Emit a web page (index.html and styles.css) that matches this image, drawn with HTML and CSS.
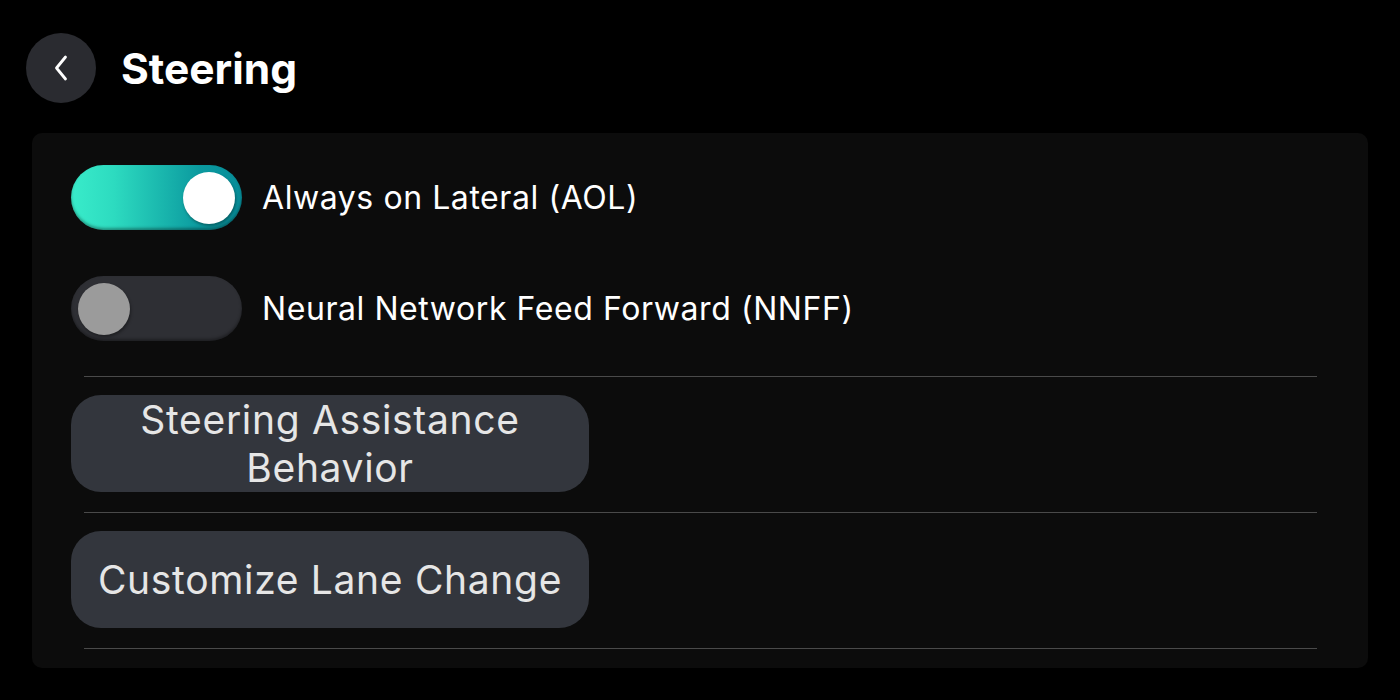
FILE: index.html
```html
<!DOCTYPE html>
<html lang="en">

<head>
    <meta charset="UTF-8">
    <meta name="viewport" content="width=device-width, initial-scale=1.0">
    <title>Steering</title>
    <link rel="stylesheet" href="styles.css">
</head>

<body>

    <div class="header">
        <button class="back">
            <svg width="20" height="30" viewBox="0 0 20 30">
                <path d="M14.5 4 L5.5 15 L14.5 26" fill="none" stroke="#ffffff" stroke-width="2.8" stroke-linecap="round" stroke-linejoin="round" />
            </svg>
        </button>
        <h1>Steering</h1>
    </div>

    <div class="card">

        <div class="row">
            <div class="toggle on"><div class="knob"></div></div>
            <span class="label">Always on Lateral (AOL)</span>
        </div>

        <div class="row">
            <div class="toggle"><div class="knob"></div></div>
            <span class="label">Neural Network Feed Forward (NNFF)</span>
        </div>

        <hr class="divider" />

        <button class="menu-btn">Steering Assistance Behavior</button>

        <hr class="divider" />

        <button class="menu-btn">Customize Lane Change</button>

        <hr class="divider" />

    </div>

</body>

</html>
```

FILE: styles.css
```css
body {
    background: #000000;
    margin: 0px;
    font-family: Inter, "Noto Sans", sans-serif;
    color: #ffffff;
}

.header {
    display: flex;
    align-items: center;
    padding: 33px 26px 30px 26px;
}

.back {
    width: 70px;
    height: 70px;
    border-radius: 50%;
    border: none;
    background: #2a2b30;
    display: flex;
    align-items: center;
    justify-content: center;
    padding: 0;
}

.header h1 {
    margin: 0 0 0 25px;
    font-size: 42.5px;
    font-weight: 700;
}

.card {
    margin: 0 32px;
    background: #0c0c0c;
    border-radius: 10px;
    padding: 32px 51px 19px 39px;
}

.row {
    display: flex;
    align-items: center;
    height: 65px;
    margin-bottom: 46px;
}

.row + .row {
    margin-bottom: 35px;
}

.toggle {
    width: 171px;
    height: 65px;
    border-radius: 33px;
    background: #2e2f34;
    display: flex;
    align-items: center;
    padding: 0 7px;
    box-sizing: border-box;
    box-shadow: inset 0 -2px 3px rgba(0, 0, 0, 0.35);
}

.toggle .knob {
    width: 52px;
    height: 52px;
    border-radius: 50%;
    background: #9b9b9b;
    box-shadow: 1px 2px 3px rgba(0, 0, 0, 0.35);
}

.toggle.on {
    background: linear-gradient(90deg, #39ecca 0%, #2ddbc0 25%, #0b9a9f 75%, #078d99 100%);
    justify-content: flex-end;
}

.toggle.on .knob {
    background: #ffffff;
}

.label {
    margin-left: 20px;
    font-size: 32px;
    letter-spacing: 0.57px;
}

.divider {
    border: none;
    height: 1px;
    background: #4a4a4a;
    margin: 0 0 0 13px;
}

.menu-btn {
    display: block;
    width: 518px;
    height: 97px;
    margin: 18px 0 20px 0;
    border: none;
    border-radius: 30px;
    background: #33363d;
    color: #e6e6e6;
    font-family: Inter, "Noto Sans", sans-serif;
    font-size: 39px;
    letter-spacing: 0.67px;
    line-height: 48px;
    padding: 0 20px;
}
```
